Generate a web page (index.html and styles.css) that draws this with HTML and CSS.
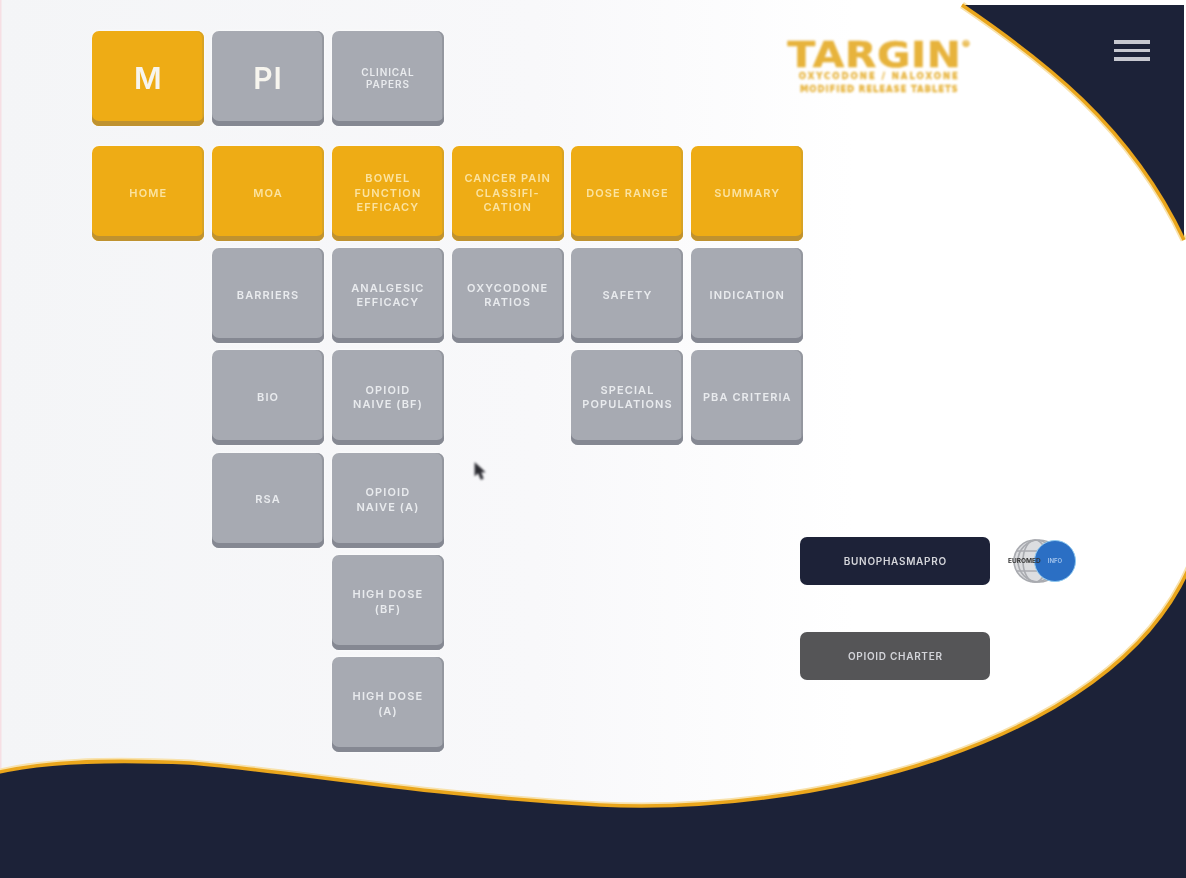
FILE: index.html
```html
<!DOCTYPE html>
<html lang="en">
<head>
<meta charset="utf-8">
<title>Targin</title>
<link rel="stylesheet" href="styles.css">
</head>
<body>
<div class="page">
  <svg class="backdrop" viewBox="0 0 1186 878" preserveAspectRatio="none" aria-hidden="true">
    <defs>
      <linearGradient id="paper" x1="0" x2="1" y1="0" y2="0">
        <stop offset="0" stop-color="#f4f5f7"/>
        <stop offset="0.45" stop-color="#f8f8fa"/>
        <stop offset="0.72" stop-color="#ffffff"/>
      </linearGradient>
      <filter id="soft"><feGaussianBlur stdDeviation="0.7"/></filter>
    </defs>
    <rect width="1186" height="878" fill="url(#paper)"/>
    <rect width="1.5" height="770" fill="#f6dfe4"/>
    <g filter="url(#soft)">
      <path class="glow" d="M962 5 C1040 58 1130 125 1184 240"/>
      <path class="navy" d="M962 5 L1184 5 L1184 240 C1130 125 1040 58 962 5 Z"/>
      <path class="rim" d="M962 5 C1040 58 1130 125 1184 240"/>
      <path class="glow" d="M-5 773 C40 762 100 759 190 763 C300 772 420 795 600 805 C800 815 1110 750 1190 566"/>
      <path class="navy" d="M-5 773 C40 762 100 759 190 763 C300 772 420 795 600 805 C800 815 1110 750 1190 566 L1190 885 L-5 885 Z"/>
      <path class="rim" d="M-5 773 C40 762 100 759 190 763 C300 772 420 795 600 805 C800 815 1110 750 1190 566"/>
    </g>
  </svg>

  <main class="layout">
    <nav class="tile-board">
      <div class="tiles tiles-top">
        <a class="tile gold large"><span>M</span></a>
        <a class="tile grey large"><span>PI</span></a>
        <a class="tile grey small"><span>CLINICAL<br>PAPERS</span></a>
      </div>
      <div class="tiles">
        <a class="tile gold"><span>HOME</span></a>
        <a class="tile gold"><span>MOA</span></a>
        <a class="tile gold"><span>BOWEL<br>FUNCTION<br>EFFICACY</span></a>
        <a class="tile gold"><span>CANCER PAIN<br>CLASSIFI-<br>CATION</span></a>
        <a class="tile gold"><span>DOSE RANGE</span></a>
        <a class="tile gold"><span>SUMMARY</span></a>

        <span class="blank"></span>
        <a class="tile grey"><span>BARRIERS</span></a>
        <a class="tile grey"><span>ANALGESIC<br>EFFICACY</span></a>
        <a class="tile grey"><span>OXYCODONE<br>RATIOS</span></a>
        <a class="tile grey"><span>SAFETY</span></a>
        <a class="tile grey"><span>INDICATION</span></a>

        <span class="blank"></span>
        <a class="tile grey"><span>BIO</span></a>
        <a class="tile grey"><span>OPIOID<br>NAIVE (BF)</span></a>
        <span class="blank"></span>
        <a class="tile grey"><span>SPECIAL<br>POPULATIONS</span></a>
        <a class="tile grey"><span>PBA CRITERIA</span></a>

        <span class="blank"></span>
        <a class="tile grey"><span>RSA</span></a>
        <a class="tile grey"><span>OPIOID<br>NAIVE (A)</span></a>
        <span class="blank"></span><span class="blank"></span><span class="blank"></span>

        <span class="blank"></span><span class="blank"></span>
        <a class="tile grey"><span>HIGH DOSE<br>(BF)</span></a>
        <span class="blank"></span><span class="blank"></span><span class="blank"></span>

        <span class="blank"></span><span class="blank"></span>
        <a class="tile grey"><span>HIGH DOSE<br>(A)</span></a>
      </div>
    </nav>

    <aside class="side">
      <header class="side-top">
        <div class="logo">
          <div class="logo-name">TARGIN<sup>®</sup></div>
          <div class="logo-line logo-line-a">OXYCODONE / NALOXONE</div>
          <div class="logo-line logo-line-b">MODIFIED RELEASE TABLETS</div>
        </div>
        <button class="menu" aria-label="Menu"><i></i><i></i><i></i></button>
      </header>

      <div class="action-row">
        <a class="action navy-btn">BUNOPHASMAPRO</a>
        <svg class="seal" viewBox="0 0 72 50" aria-hidden="true">
          <circle cx="27" cy="25" r="21" fill="#dcdde0"/>
          <g fill="none" stroke="#a9abb0" stroke-width="1.6">
            <circle cx="27" cy="25" r="21"/>
            <circle cx="31" cy="25" r="21"/>
            <ellipse cx="27" cy="25" rx="12" ry="21"/>
            <path d="M8 15 H30 M8 35 H30"/>
          </g>
          <circle class="seal-blue" cx="47" cy="25" r="20.5"/>
          <text class="seal-dark" x="0" y="27">EUROMED</text>
          <text class="seal-light" x="47" y="27" text-anchor="middle">INFO</text>
        </svg>
      </div>
      <a class="action slate-btn">OPIOID CHARTER</a>
    </aside>
  </main>

  <svg class="cursor" viewBox="0 0 14 22" aria-hidden="true">
    <path d="M1 1 L1 15 L4.5 12 L7.5 19 L10 18 L7.5 11 L12 11 Z" fill="#2a2a30" stroke="#55555c" stroke-width="1"/>
  </svg>
</div>
</body>
</html>
```
FILE: styles.css
```css
* { box-sizing: border-box; }
html, body { margin: 0; padding: 0; }
body { background: #fff; font-family: "Inter", "Liberation Sans", sans-serif; }

.page {
  position: relative;
  width: 1186px;
  height: 878px;
  overflow: hidden;
}
.backdrop {
  position: absolute;
  inset: 0;
  width: 100%;
  height: 100%;
}
.navy { fill: #1f2337; }
.rim { fill: none; stroke: #eaa61c; stroke-width: 3.5; }
.glow { fill: none; stroke: #f8e2ac; stroke-width: 7; }

.layout {
  position: relative;
  display: flex;
  padding: 31px 0 0 92.3px;
}

.tile-board {
  flex: none;
  width: 696px;
}
.tiles {
  display: grid;
  grid-template-columns: repeat(6, 112px);
  grid-auto-rows: 95px;
  column-gap: 7.8px;
  row-gap: 7.2px;
}
.tiles-top { margin-bottom: 20px; }
.blank { display: block; }

.tile {
  display: flex;
  align-items: center;
  justify-content: center;
  padding: 0 2px 1px;
  border-radius: 7px;
  font-size: 11px;
  font-weight: 600;
  letter-spacing: 1.1px;
  line-height: 14.5px;
  text-align: center;
  white-space: nowrap;
  filter: blur(0.5px);
}
.tile span { filter: blur(0.5px); }
.gold {
  background: #eeac15;
  color: #fbe3a0;
  box-shadow: inset 0 -5px 0 #bf9230, inset -2px 0 0 #d8a324, 0 0 3px #fff;
}
.grey {
  background: #a7aab2;
  color: #e9ebee;
  box-shadow: inset 0 -5px 0 #858892, inset -2px 0 0 #94979f, 0 0 3px #fff;
}
.large { font-size: 30px; font-weight: 600; letter-spacing: 1px; line-height: 34px; color: #f7f5ee; }
.small { font-size: 10px; letter-spacing: 0.9px; line-height: 12px; }

.side {
  flex: none;
  width: 362px;
}
.side-top {
  display: flex;
  justify-content: space-between;
  align-items: flex-start;
  padding-top: 9px;
}
.logo {
  width: 182px;
  color: #e7b33c;
  text-align: center;
  font-family: "DejaVu Sans", "Liberation Sans", sans-serif;
  filter: blur(0.8px);
}
.logo-name {
  font-size: 36px;
  font-weight: 700;
  line-height: 30px;
  letter-spacing: 0.6px;
  white-space: nowrap;
  -webkit-text-stroke: 0.5px #e7b33c;
  transform: scaleX(1.13);
}
.logo-name sup { font-size: 8px; line-height: 0; vertical-align: 20px; letter-spacing: 0; }
.logo-line {
  font-size: 8.5px;
  font-weight: 700;
  line-height: 13px;
  white-space: nowrap;
  -webkit-text-stroke: 0.3px #e7b33c;
}
.logo-line-a { letter-spacing: 2px; }
.logo-line-b { letter-spacing: 0.9px; }
.menu {
  display: flex;
  flex-direction: column;
  gap: 5px;
  width: 36px;
  padding: 0;
  border: 0;
  background: none;
  filter: blur(0.5px);
}
.menu i { display: block; height: 3.5px; background: #c6c8d0; }

.action-row {
  display: flex;
  align-items: center;
  gap: 18px;
  margin: 440px 0 46px 12px;
}
.action {
  display: flex;
  align-items: center;
  justify-content: center;
  width: 190px;
  height: 48px;
  border-radius: 7px;
  color: #d4d5da;
  font-size: 10px;
  font-weight: 600;
  letter-spacing: 0.7px;
  filter: blur(0.7px);
}
.slate-btn { margin-left: 12px; background: #555557; }
.navy-btn { background: #1d2238; }
.seal { width: 72px; height: 50px; flex: none; filter: blur(0.7px); }
.seal-blue { fill: #2b6fc4; stroke: #8cc6ee; stroke-width: 1; }
.seal-dark { fill: #333; font-size: 6.5px; font-weight: 700; }
.seal-light { fill: #a8c8ee; font-size: 6px; font-weight: 600; }

.cursor {
  position: absolute;
  left: 474px;
  top: 461px;
  width: 13px;
  height: 22px;
  filter: blur(0.9px);
}
```
